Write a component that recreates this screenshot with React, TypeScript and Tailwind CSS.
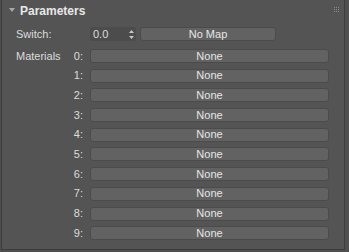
import React from "react";

const font = { fontFamily: '"Liberation Sans", Arial, sans-serif' };

function Btn({ label, className }: { label: string; className: string }) {
  return (
    <div
      className={
        "h-[14px] rounded-[3px] bg-[#626262] border border-[#4b4b4b] flex items-center justify-center text-[11px] leading-none text-[#e6e6e6] " +
        className
      }
    >
      {label}
    </div>
  );
}

export default function App() {
  const rows = ["0", "1", "2", "3", "4", "5", "6", "7", "8", "9"];
  return (
    <div className="w-[349px] h-[252px] bg-[#4f4f4f] overflow-hidden" style={font}>
      <div className="ml-[1px] w-[344px] h-[250px] bg-[#545454] border border-[#3c3c3c] border-t-0 relative">
        <div className="h-[21px] flex items-center pl-[7px]">
          <svg width="6" height="4" viewBox="0 0 6 4" className="mr-[5px] mt-[-2px]">
            <polygon points="0,0 6,0 3,4" fill="#a8a8a8" />
          </svg>
          <span className="text-[12px] font-bold text-[#e8e8e8] leading-none">Parameters</span>
        </div>
        <div className="absolute right-[5px] top-[7px] grid grid-cols-3 gap-[1px]">
          {Array.from({ length: 9 }).map((_, i) => (
            <div key={i} className="w-[1px] h-[1px] bg-[#8a8a8a]" />
          ))}
        </div>
        <div className="flex items-center mt-[6px] h-[14px]">
          <span className="w-[88px] pl-[14px] text-[11px] text-[#dcdcdc] leading-none">Switch:</span>
          <div className="w-[46px] h-[14px] bg-[#4c4c4c] rounded-[2px] flex items-center pl-[3px] pr-[2px] text-[11px] text-[#dcdcdc] leading-none">
            <span className="flex-1">0.0</span>
            <svg width="5" height="9" viewBox="0 0 5 9">
              <polygon points="0,3 5,3 2.5,0" fill="#c8c8c8" />
              <polygon points="0,6 5,6 2.5,9" fill="#c8c8c8" />
            </svg>
          </div>
          <Btn label="No Map" className="ml-[4px] w-[136px]" />
        </div>
        <div className="mt-[8px] flex flex-col gap-[5.7px]">
          {rows.map((r, i) => (
            <div key={r} className="flex items-center h-[14px]">
              <span className="w-[58px] pl-[14px] text-[11px] text-[#dcdcdc] leading-none">
                {i === 0 ? "Materials" : ""}
              </span>
              <span className="w-[30px] text-right pr-[7px] text-[11px] text-[#dcdcdc] leading-none">{r}:</span>
              <Btn label="None" className="w-[239px]" />
            </div>
          ))}
        </div>
      </div>
    </div>
  );
}
